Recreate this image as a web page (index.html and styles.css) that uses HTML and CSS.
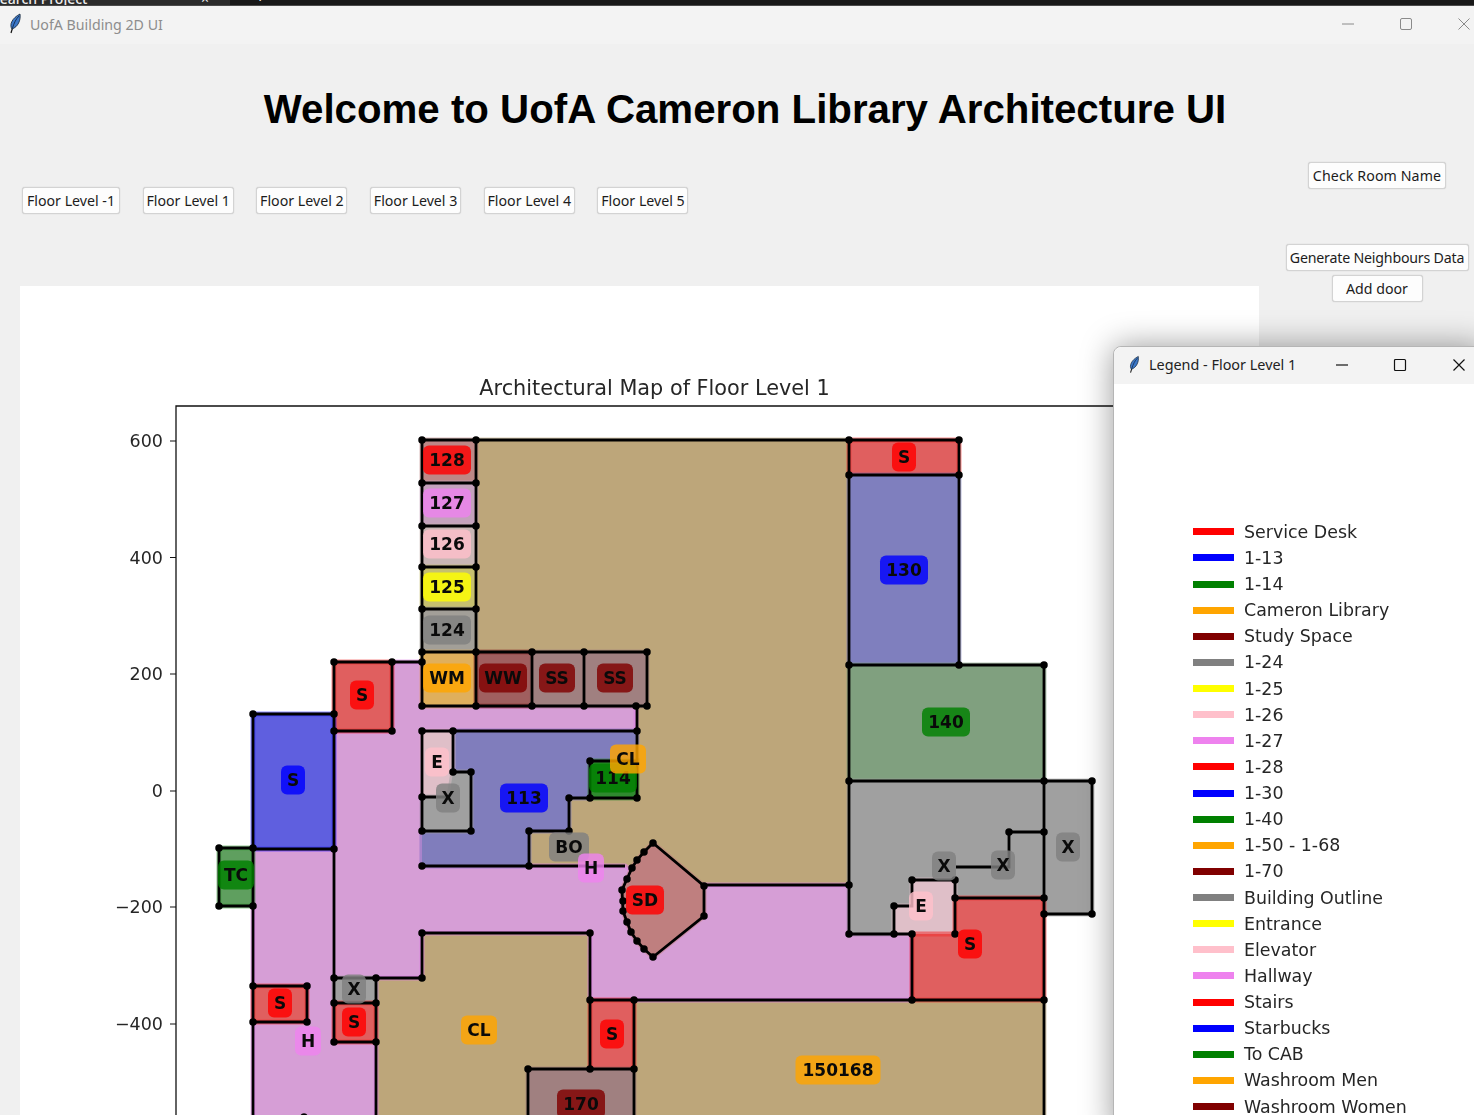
FILE: index.html
```html
<!DOCTYPE html>
<html lang="en">
<head>
<meta charset="utf-8">
<title>UofA Building 2D UI</title>
<link rel="stylesheet" href="styles.css">
</head>
<body>
<svg width="0" height="0" class="defs">
  <defs>
    <symbol id="feather" viewBox="0 0 14 22">
      <path d="M3 20 L4.5 15" class="feather-quill"/>
      <path d="M4 16 C1 12 4 5 12 1 C13 7 10 14 4 16 Z" class="feather-vane"/>
      <path d="M4.5 15 C6 10 8 6 11 3" class="feather-rib"/>
    </symbol>
  </defs>
</svg>
<div class="taskstrip">
  <div class="tab"><span class="tab-text">Search Project</span><span class="tab-x">×</span></div>
  <span class="tab-plus">+</span>
</div>
<div class="titlebar">
  <svg class="app-icon"><use href="#feather"/></svg>
  <span class="title-text">UofA Building 2D UI</span>
  <div class="controls controls-dim">
    <svg viewBox="0 0 12 12"><path d="M0 6H12"/></svg>
    <svg viewBox="0 0 12 12"><rect x=".5" y=".5" width="11" height="11" rx="1.5"/></svg>
    <svg viewBox="0 0 12 12"><path d="M.5 .5L11.5 11.5M11.5 .5L.5 11.5"/></svg>
  </div>
</div>
<main class="client">
  <h1 class="heading">Welcome to UofA Cameron Library Architecture UI</h1>
  <div class="workspace">
    <div class="left-col">
      <div class="floors">
        <button class="btn btn-floor btn-floor-wide">Floor Level -1</button>
        <button class="btn btn-floor">Floor Level 1</button>
        <button class="btn btn-floor">Floor Level 2</button>
        <button class="btn btn-floor">Floor Level 3</button>
        <button class="btn btn-floor">Floor Level 4</button>
        <button class="btn btn-floor">Floor Level 5</button>
      </div>
      <svg class="map" width="1239" height="829" viewBox="20 286 1239 829">
        <text x="654.500" y="395" class="map-title">Architectural Map of Floor Level 1</text>
        <g class="rooms">
          <polygon class="f-brown" points="476,440 849,440 849,888 476,888"/>
          <polygon class="f-brown" points="422,933 590,933 590,1069 528,1069 528,1125 376,1125 376,978 422,978"/>
          <polygon class="f-brown" points="634,1000 1044,1000 1044,1125 634,1125"/>
          <polygon class="f-hall" points="392,662 422,662 422,706 636,706 636,731 422,731 422,866 625,866 653,885 849,885 849,934 912,934 912,1000 590,1000 590,933 422,933 422,978 376,978 376,1125 253,1125 253,849 334,849 334,731 392,731"/>
          <polygon class="f-room" points="453,731 637,731 637,761 590,761 590,798 569,798 569,831 529,831 529,866 422,866 422,831 471,831 471,772 453,772"/>
          <polygon class="f-green" points="590,761 637,761 637,798 590,798"/>
          <polygon class="f-pale" points="422,731 453,731 453,772 449,797 422,797"/>
          <polygon class="f-gray" points="422,797 449,797 453,772 471,772 471,831 422,831"/>
          <polygon class="f-red" points="334,662 392,662 392,731 334,731"/>
          <polygon class="f-blue" points="253,714 334,714 334,849 253,849"/>
          <polygon class="f-green2" points="219,848 253,848 253,906 219,906"/>
          <polygon class="f-r128" points="422,440 476,440 476,483 422,483"/>
          <polygon class="f-r127" points="422,483 476,483 476,526 422,526"/>
          <polygon class="f-r126" points="422,526 476,526 476,567 422,567"/>
          <polygon class="f-r125" points="422,567 476,567 476,609 422,609"/>
          <polygon class="f-r124" points="422,609 476,609 476,652 422,652"/>
          <polygon class="f-wm" points="422,652 476,652 476,706 422,706"/>
          <polygon class="f-ww" points="476,652 532,652 532,706 476,706"/>
          <polygon class="f-ss" points="532,652 647,652 647,706 532,706"/>
          <polygon class="f-sd" points="653,843 704,886 704,916 653,957 644,949 637,941 631,932 627,922 623,911 622,890 627,879 632,868 637,860 644,852"/>
          <polygon class="f-red" points="849,440 959,440 959,475 849,475"/>
          <polygon class="f-room2" points="849,475 959,475 959,665 849,665"/>
          <polygon class="f-green3" points="849,665 1044,665 1044,781 849,781"/>
          <polygon class="f-gray" points="849,781 1092,781 1092,914 1044,914 1044,898 955,898 955,880 912,880 912,906 894,906 894,934 849,934"/>
          <polygon class="f-pale" points="912,880 955,880 955,934 894,934 894,906 912,906"/>
          <polygon class="f-red" points="955,898 1044,898 1044,1000 912,1000 912,934 955,934"/>
          <polygon class="f-red" points="590,1000 634,1000 634,1069 590,1069"/>
          <polygon class="f-ss" points="528,1069 634,1069 634,1125 528,1125"/>
          <polygon class="f-red" points="253,986 307,986 307,1022 253,1022"/>
          <polygon class="f-gray" points="334,978 376,978 376,1003 334,1003"/>
          <polygon class="f-red" points="334,1003 376,1003 376,1042 334,1042"/>
        </g>
        <path class="walls" d="M253,714H334V849H253ZM219,848H253V906H219ZM334,662H392V731H334ZM392,662H422
          M253,849V1125M334,849V1042H376M334,978H376V1125M376,978H422V933H590V1069M334,1003H376M253,986H307V1022H253
          M422,440H849V934H912M422,440V706M476,440V706M422,483H476M422,526H476M422,567H476M422,609H476M422,652H647V706H422M532,652V706M584,652V706
          M637,706V798H590V761H637M422,731H637M453,731V772H471V831H422V731M422,797H449M590,798H569V831H529V866H625M422,866H529
          M653,843L704,886V916L653,957L644,949L637,941L631,932L627,922L623,911L622,890L627,879L632,868L637,860L644,852ZM704,885H849
          M849,440H959V665M849,475H959M849,665H1044V1125M959,665H959M849,781H1092V914H1044
          M912,934V1000M590,1000H1044M634,1000V1125M528,1069H634M528,1069V1125M955,898H1044M955,880V934M912,880H955M912,880V906H894V934M956,867H1009V832H1044"/>
        <path class="dots" d="M422,440h0M476,440h0M422,483h0M476,483h0M422,526h0M476,526h0M422,567h0M476,567h0M422,609h0M476,609h0M422,652h0M476,652h0M532,652h0M584,652h0M647,652h0M422,706h0M476,706h0M532,706h0M584,706h0M636,706h0M647,706h0
          M334,662h0M392,662h0M422,662h0M334,731h0M392,731h0M253,714h0M334,714h0M253,848h0M334,849h0M219,848h0M219,906h0M253,906h0
          M422,731h0M453,731h0M637,731h0M453,772h0M471,772h0M422,797h0M422,831h0M471,831h0M590,761h0M590,798h0M637,798h0M569,798h0M569,831h0M529,831h0M529,866h0M422,866h0
          M653,843h0M644,852h0M637,860h0M632,868h0M627,879h0M622,890h0M623,901h0M623,911h0M627,922h0M631,932h0M637,941h0M644,949h0M653,957h0M704,886h0M704,916h0
          M422,933h0M590,933h0M422,978h0M334,978h0M376,978h0M334,1003h0M376,1003h0M334,1042h0M376,1042h0M253,986h0M307,986h0M253,1022h0M307,1022h0
          M590,1000h0M634,1000h0M528,1069h0M590,1069h0M634,1069h0M304,1117h0
          M849,440h0M959,440h0M849,475h0M959,475h0M849,665h0M959,665h0M1044,665h0M849,781h0M1044,781h0M1092,781h0M1092,914h0M1044,914h0M1044,898h0M955,898h0M955,880h0M912,880h0M912,934h0M955,934h0M894,906h0M894,934h0M849,934h0M912,1000h0M1044,1000h0M849,885h0M1009,832h0M1044,832h0"/>
        <path class="axes" d="M176,1125V406H1250"/>
        <path class="ticks" d="M170,441h6M170,557.500h6M170,674h6M170,791h6M170,907h6M170,1024h6"/>
        <g class="tick-labels">
          <text x="163" y="447">600</text>
          <text x="163" y="563.500">400</text>
          <text x="163" y="680">200</text>
          <text x="163" y="797">0</text>
          <text x="163" y="913">−200</text>
          <text x="163" y="1030">−400</text>
        </g>
        <g class="labels">
          <g transform="translate(447 460)"><rect class="w48 c-red"/><text y="6">128</text></g>
          <g transform="translate(447 503)"><rect class="w48 c-violet"/><text y="6">127</text></g>
          <g transform="translate(447 544)"><rect class="w48 c-pink"/><text y="6">126</text></g>
          <g transform="translate(447 587)"><rect class="w48 c-yellow"/><text y="6">125</text></g>
          <g transform="translate(447 630)"><rect class="w48 c-gray"/><text y="6">124</text></g>
          <g transform="translate(447 678)"><rect class="w48 c-orange"/><text y="6">WM</text></g>
          <g transform="translate(503 678)"><rect class="w48 c-maroon"/><text y="6">WW</text></g>
          <g transform="translate(557 678)"><rect class="w36 c-maroon"/><text y="6">SS</text></g>
          <g transform="translate(615 678)"><rect class="w36 c-maroon"/><text y="6">SS</text></g>
          <g transform="translate(362 695)"><rect class="w24 c-red"/><text y="6">S</text></g>
          <g transform="translate(293 780)"><rect class="w24 c-blue"/><text y="6">S</text></g>
          <g transform="translate(236 875)"><rect class="w36 c-green"/><text y="6">TC</text></g>
          <g transform="translate(437 762)"><rect class="w24 c-pink"/><text y="6">E</text></g>
          <g transform="translate(448 798)"><rect class="w24 c-gray"/><text y="6">X</text></g>
          <g transform="translate(524 798)"><rect class="w48 c-blue"/><text y="6">113</text></g>
          <g transform="translate(613 778)"><rect class="w48 c-green"/><text y="6">114</text></g>
          <g transform="translate(628 759)"><rect class="w36 c-orange"/><text y="6">CL</text></g>
          <g transform="translate(569 847)"><rect class="w40 c-gray"/><text y="6">BO</text></g>
          <g transform="translate(591 868)"><rect class="w26 c-violet"/><text y="6">H</text></g>
          <g transform="translate(645 900)"><rect class="w38 c-red"/><text y="6">SD</text></g>
          <g transform="translate(280 1003)"><rect class="w24 c-red"/><text y="6">S</text></g>
          <g transform="translate(354 989)"><rect class="w24 c-gray"/><text y="6">X</text></g>
          <g transform="translate(354 1022)"><rect class="w24 c-red"/><text y="6">S</text></g>
          <g transform="translate(308 1041)"><rect class="w26 c-violet"/><text y="6">H</text></g>
          <g transform="translate(479 1030)"><rect class="w36 c-orange"/><text y="6">CL</text></g>
          <g transform="translate(612 1034)"><rect class="w24 c-red"/><text y="6">S</text></g>
          <g transform="translate(581 1104)"><rect class="w48 c-maroon"/><text y="6">170</text></g>
          <g transform="translate(904 457)"><rect class="w24 c-red"/><text y="6">S</text></g>
          <g transform="translate(904 570)"><rect class="w48 c-blue"/><text y="6">130</text></g>
          <g transform="translate(946 722)"><rect class="w48 c-green"/><text y="6">140</text></g>
          <g transform="translate(1068 847)"><rect class="w24 c-gray"/><text y="6">X</text></g>
          <g transform="translate(944 866)"><rect class="w24 c-gray"/><text y="6">X</text></g>
          <g transform="translate(1003 865)"><rect class="w24 c-gray"/><text y="6">X</text></g>
          <g transform="translate(921 906)"><rect class="w24 c-pink"/><text y="6">E</text></g>
          <g transform="translate(970 944)"><rect class="w24 c-red"/><text y="6">S</text></g>
          <g transform="translate(838 1070)"><rect class="w85 c-orange"/><text y="6">150168</text></g>
        </g>
      </svg>
    </div>
    <div class="right-col">
      <button class="btn btn-check">Check Room Name</button>
      <button class="btn btn-gen">Generate Neighbours Data</button>
      <button class="btn btn-door">Add door</button>
    </div>
  </div>
</main>
<aside class="legend-window">
  <div class="legend-bar">
    <svg class="legend-icon"><use href="#feather"/></svg>
    <span class="legend-title">Legend - Floor Level 1</span>
    <div class="controls controls-dark">
      <svg viewBox="0 0 12 12"><path d="M0 6H12"/></svg>
      <svg viewBox="0 0 12 12"><rect x=".5" y=".5" width="11" height="11" rx="1"/></svg>
      <svg viewBox="0 0 12 12"><path d="M.5 .5L11.5 11.5M11.5 .5L.5 11.5"/></svg>
    </div>
  </div>
  <ul class="legend-list">
    <li><i class="k-red"></i>Service Desk</li>
    <li><i class="k-blue"></i>1-13</li>
    <li><i class="k-green"></i>1-14</li>
    <li><i class="k-orange"></i>Cameron Library</li>
    <li><i class="k-maroon"></i>Study Space</li>
    <li><i class="k-gray"></i>1-24</li>
    <li><i class="k-yellow"></i>1-25</li>
    <li><i class="k-pink"></i>1-26</li>
    <li><i class="k-violet"></i>1-27</li>
    <li><i class="k-red"></i>1-28</li>
    <li><i class="k-blue"></i>1-30</li>
    <li><i class="k-green"></i>1-40</li>
    <li><i class="k-orange"></i>1-50 - 1-68</li>
    <li><i class="k-maroon"></i>1-70</li>
    <li><i class="k-gray"></i>Building Outline</li>
    <li><i class="k-yellow"></i>Entrance</li>
    <li><i class="k-pink"></i>Elevator</li>
    <li><i class="k-violet"></i>Hallway</li>
    <li><i class="k-red"></i>Stairs</li>
    <li><i class="k-blue"></i>Starbucks</li>
    <li><i class="k-green"></i>To CAB</li>
    <li><i class="k-orange"></i>Washroom Men</li>
    <li><i class="k-maroon"></i>Washroom Women</li>
  </ul>
</aside>
</body>
</html>
```
FILE: styles.css
```css
html, body { margin: 0; padding: 0; height: 1115px; overflow: hidden; background: #f0f0f0; }
body { position: relative; font-family: "Noto Sans", "Open Sans", sans-serif; }
.defs { position: absolute; }

.taskstrip { height: 5px; background: #181818; border-bottom: 1px solid #4a4a4a; display: flex; overflow: hidden; color: #eee; font-size: 14px; line-height: 16px; }
.tab { width: 230px; background: #2b2b2b; display: flex; justify-content: space-between; margin-top: -9px; height: 20px; }
.tab-text { margin-left: -8px; font-weight: 500; }
.tab-x { margin-right: 21px; }
.tab-plus { margin: -12px 0 0 25px; font-size: 18px; }

.titlebar { height: 38px; background: #f3f3f3; display: flex; align-items: center; padding-left: 8px; }
.app-icon { width: 14px; height: 22px; margin-top: -2px; }
.title-text { margin-left: 8px; color: #8d8d8d; font-size: 14.200px; margin-top: -2px; }
.feather-vane { fill: #3c78c8; stroke: #123; stroke-width: .8; }
.feather-rib { fill: none; stroke: #0c1e38; stroke-width: .8; }
.feather-quill { fill: none; stroke: #111; stroke-width: 1.2; }

.controls { margin-left: auto; display: flex; }
.controls svg { width: 12px; height: 12px; fill: none; overflow: visible; margin-left: 46px; flex: none; }
.controls-dim { margin-right: 4px; margin-top: -2px; }
.controls-dim svg { stroke: #8a8a8a; stroke-width: 1; }
.controls-dark svg { stroke: #111; stroke-width: 1.2; }

.client { display: flex; flex-direction: column; }
.heading { margin: 43px 0 0 16px; text-align: center; font: bold 40.250px/46px "Liberation Sans", Arial, sans-serif; color: #000; height: 74px; }
.workspace { display: flex; }
.left-col { width: 1259px; padding-left: 20px; box-sizing: border-box; flex: none; }
.floors { display: flex; gap: 22.700px; padding: 26px 0 0 2px; height: 99px; }
.map { display: block; background: #fff; filter: blur(.4px); }

.btn { height: 27px; padding: 0; box-sizing: border-box; background: #fdfdfd; border: 1px solid #d3d3d3; border-radius: 3px; font: 14.200px/23px "Noto Sans", "Open Sans", sans-serif; color: #1c1c1c; box-shadow: 0 0 1px #bbb; white-space: nowrap; }
.btn-floor { width: 91px; }
.btn-floor-wide { width: 98px; }
.right-col { flex: 1; display: flex; flex-direction: column; align-items: center; padding: 1px 0 0 21px; }
.btn-check { width: 138px; letter-spacing: .1px; }
.btn-gen { margin-top: 55px; width: 183px; letter-spacing: -.2px; }
.btn-door { margin-top: 4px; width: 91px; }

.rooms polygon { stroke-width: 5; stroke-opacity: .55; stroke-linejoin: miter; }
.f-brown { fill: #bda67a; stroke: #bda67a; }
.f-hall { fill: #d69ed6; stroke: #e080e8; }
.f-room { fill: #807dbc; stroke: #807dbc; }
.f-room2 { fill: #7f7fbe; stroke: #7f7fbe; }
.f-green { fill: #2f8a2f; stroke: #2f8a2f; }
.f-green2 { fill: #5f9f5f; stroke: #40a040; }
.f-green3 { fill: #80a07f; stroke: #80a07f; }
.f-pale { fill: #dfbfc8; stroke: #dfbfc8; }
.f-gray { fill: #a0a0a0; stroke: #a0a0a0; }
.f-red { fill: #e05f5f; stroke: #f03030; }
.f-blue { fill: #5f5fdf; stroke: #3030ff; }
.f-r128 { fill: #bd8886; stroke: #bd8886; }
.f-r127 { fill: #c4a2bc; stroke: #c4a2bc; }
.f-r126 { fill: #c8b6b5; stroke: #c8b6b5; }
.f-r125 { fill: #c6c06f; stroke: #c6c06f; }
.f-r124 { fill: #a29f98; stroke: #a29f98; }
.f-wm { fill: #dfaf5c; stroke: #dfaf5c; }
.f-ww { fill: #a05f5f; stroke: #90302f; }
.f-ss { fill: #a08080; stroke: #a08080; }
.f-sd { fill: #bf7f7f; stroke: #bf7f7f; }

.walls { fill: none; stroke: #000; stroke-width: 2.800; stroke-linejoin: miter; }
.dots { fill: none; stroke: #000; stroke-width: 7.500; stroke-linecap: round; }
.axes { fill: none; stroke: #111; stroke-width: 1.300; }
.ticks { fill: none; stroke: #111; stroke-width: 1.200; }
.map-title { font: 20.800px "DejaVu Sans", sans-serif; fill: #262626; text-anchor: middle; }
.tick-labels text { font: 17.500px "DejaVu Sans", sans-serif; fill: #262626; text-anchor: end; }

.labels rect { y: -14.500px; height: 29px; rx: 6px; opacity: .82; }
.labels text { font: bold 17px "DejaVu Sans", sans-serif; fill: #0a0a0a; text-anchor: middle; }
.w24 { x: -12px; width: 24px; }
.w26 { x: -13px; width: 26px; }
.w36 { x: -18px; width: 36px; }
.w38 { x: -19px; width: 38px; }
.w40 { x: -20px; width: 40px; }
.w48 { x: -24px; width: 48px; }
.w85 { x: -42.500px; width: 85px; }
.c-red { fill: #ff0000; }
.c-blue { fill: #0000ff; }
.c-green { fill: #008000; }
.c-orange { fill: #ffa500; }
.c-maroon { fill: #800000; }
.c-gray { fill: #808080; }
.c-yellow { fill: #ffff00; }
.c-pink { fill: #ffc0cb; }
.c-violet { fill: #ee82ee; }

.legend-window { position: absolute; left: 1113px; top: 346px; width: 372px; height: 790px; background: #fff; border: 1px solid #b5b5b5; border-radius: 8px 8px 0 0; box-shadow: 0 0 32px rgba(0,0,0,.4); box-sizing: border-box; }
.legend-bar { height: 37px; box-sizing: border-box; padding: 0 0 2px 14px; background: #f3f3f3; border-radius: 8px 8px 0 0; display: flex; align-items: center; }
.legend-icon { width: 12px; height: 20px; flex: none; }
.legend-title { margin-left: 9px; font-size: 14.400px; color: #222; white-space: nowrap; flex: 1; }
.legend-bar .controls { margin: 0 19px 0 0; flex: none; }
.legend-bar .controls svg:first-child { margin-left: 0; }
.legend-bar .controls svg:last-child { margin-left: 47px; }
.legend-list { list-style: none; margin: 0; padding: 134.700px 0 0 79px; filter: blur(.3px); }
.legend-list li { height: 26.130px; display: flex; align-items: center; font: 17.400px "DejaVu Sans", sans-serif; color: #262626; white-space: nowrap; }
.legend-list i { width: 41px; height: 7px; margin-right: 10px; flex: none; }
.k-red { background: #ff0000; }
.k-blue { background: #0000ff; }
.k-green { background: #008000; }
.k-orange { background: #ffa500; }
.k-maroon { background: #800000; }
.k-gray { background: #808080; }
.k-yellow { background: #ffff00; }
.k-pink { background: #ffc0cb; }
.k-violet { background: #ee82ee; }
```
